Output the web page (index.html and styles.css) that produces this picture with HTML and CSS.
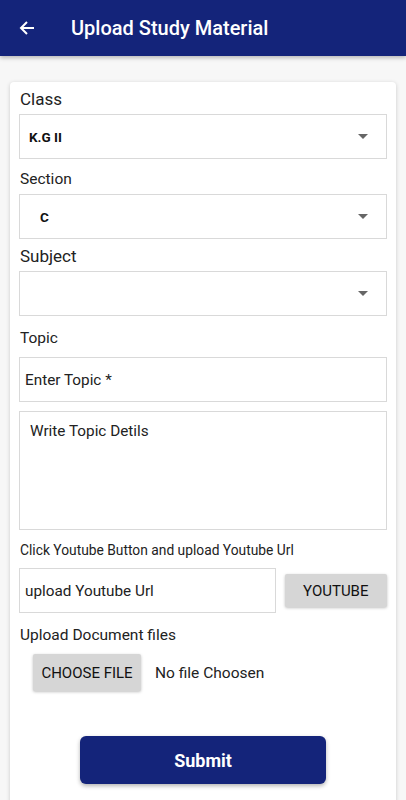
FILE: index.html
```html
<!DOCTYPE html>
<html>
<head>
    <title>Upload Study Material</title>
    <link rel="stylesheet" href="styles.css">
</head>
<body>
    <header class="app-bar">
        <svg class="back" width="16" height="16" viewBox="0 0 16 16">
            <path d="M15 8H2M8 2L2 8l6 6" fill="none" stroke="#fff" stroke-width="2"/>
        </svg>
        <h1>Upload Study Material</h1>
    </header>

    <div class="page">
        <div class="card">
            <div class="label big">Class</div>
            <div class="select">
                <span class="value">K.G II</span>
                <span class="caret"></span>
            </div>

            <div class="label section">Section</div>
            <div class="select">
                <span class="value indent">C</span>
                <span class="caret"></span>
            </div>

            <div class="label big">Subject</div>
            <div class="select">
                <span class="value"></span>
                <span class="caret"></span>
            </div>

            <div class="label topic">Topic</div>
            <div class="input">Enter Topic *</div>
            <div class="textarea">Write Topic Detils</div>

            <div class="hint">Click Youtube Button and upload Youtube Url</div>
            <div class="url-row">
                <div class="input url">upload Youtube Url</div>
                <button class="grey-btn yt">YOUTUBE</button>
            </div>

            <div class="label docs">Upload Document files</div>
            <div class="file-row">
                <button class="grey-btn choose">CHOOSE FILE</button>
                <span class="no-file">No file Choosen</span>
            </div>

            <div class="submit-wrap">
                <button class="submit">Submit</button>
            </div>
        </div>
    </div>
</body>
</html>
```

FILE: styles.css
```css
body {
    margin: 0;
    padding: 0;
    background-color: #f7f7f7;
    font-family: Roboto, "Liberation Sans", sans-serif;
    color: #222;
    overflow: hidden;
}
.app-bar {
    height: 56px;
    background-color: #14247a;
    display: flex;
    align-items: center;
    box-shadow: 0 2px 4px rgba(0, 0, 0, 0.25);
}
.back {
    margin-left: 19px;
}
.app-bar h1 {
    margin: 0 0 0 36px;
    color: #fff;
    font-size: 20px;
    font-weight: 500;
}
.page {
    padding: 26px 10px 0 10px;
}
.card {
    background-color: #fff;
    border-radius: 4px;
    box-shadow: 0 1px 4px rgba(0, 0, 0, 0.18);
    padding: 6px 9px 40px 9px;
}
.label {
    font-size: 15.5px;
    color: #222;
    padding-left: 1px;
    margin: 7px 0 6px 0;
}
.label.big {
    font-size: 17px;
    margin: 1px 0 5px 0;
}
.label.section {
    margin-top: 11px;
}
.label.topic {
    margin: 13px 0 10px 0;
}
.label.docs {
    margin: 13px 0 10px 0;
}
.select, .input {
    height: 43px;
    border: 1px solid #d9d9d9;
    display: flex;
    align-items: center;
}
.select {
    justify-content: space-between;
    margin-bottom: 8px;
}
.select + .label.big {
    margin-top: -1px;
}
.value {
    font-size: 13.5px;
    font-weight: bold;
    color: #111;
    padding-left: 9px;
}
.value.indent {
    padding-left: 20px;
}
.caret {
    width: 0;
    height: 0;
    border-left: 5px solid transparent;
    border-right: 5px solid transparent;
    border-top: 5px solid #666;
    margin-right: 18px;
}
.input {
    font-size: 15.3px;
    padding-left: 5px;
}
.textarea {
    height: 107px;
    border: 1px solid #d9d9d9;
    margin-top: 9px;
    padding: 10px 10px 0 10px;
    font-size: 15.3px;
}
.hint {
    font-size: 13.8px;
    margin: 12px 0 10px 1px;
}
.url-row {
    display: flex;
    align-items: center;
    gap: 9px;
}
.input.url {
    width: 251px;
}
.grey-btn {
    background-color: #d6d6d6;
    border: none;
    border-radius: 2px;
    box-shadow: 0 1px 3px rgba(0, 0, 0, 0.25);
    font-family: Roboto, "Liberation Sans", sans-serif;
    font-size: 15px;
    font-weight: normal;
    color: #111;
    padding: 0;
}
.yt {
    width: 103px;
    height: 33px;
}
.file-row {
    display: flex;
    align-items: center;
    padding-left: 14px;
}
.choose {
    width: 108px;
    height: 37px;
}
.no-file {
    font-size: 15.5px;
    margin-left: 14px;
}
.submit-wrap {
    display: flex;
    justify-content: center;
    margin-top: 45px;
}
.submit {
    width: 246px;
    height: 48px;
    background-color: #14247a;
    color: #fff;
    border: none;
    border-radius: 6px;
    font-family: Roboto, "Liberation Sans", sans-serif;
    font-size: 18px;
    font-weight: bold;
    box-shadow: 0 2px 4px rgba(0, 0, 0, 0.3);
}
```
